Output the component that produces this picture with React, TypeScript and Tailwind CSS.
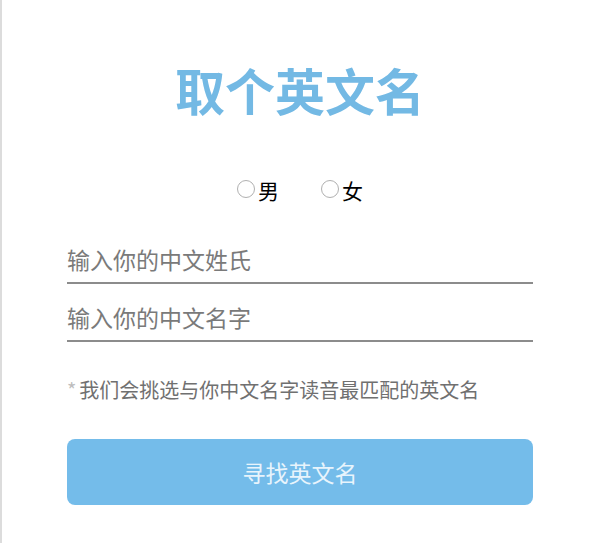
import { useState } from "react";

const font = { fontFamily: '"Noto Sans CJK SC", "Noto Sans", sans-serif' };

export default function App() {
  const [gender, setGender] = useState("");
  const [surname, setSurname] = useState("");
  const [givenName, setGivenName] = useState("");

  return (
    <div
      style={font}
      className="min-h-[543px] w-[600px] bg-white border-l-2 border-[#dcdcdc] pl-[65px] pr-[67px]"
    >
      <h1 className="pt-[62px] text-center text-[50px] leading-[54px] font-bold text-[#73b9e4]">
        取个英文名
      </h1>

      {/* gender */}
      <div className="mt-[62px] flex justify-center gap-[42px] text-[21px] leading-6 text-black">
        {[
          { value: "male", label: "男" },
          { value: "female", label: "女" },
        ].map((g) => (
          <label key={g.value} className="flex items-center gap-[3px] cursor-pointer">
            <input
              type="radio"
              name="gender"
              value={g.value}
              checked={gender === g.value}
              onChange={() => setGender(g.value)}
              className="appearance-none w-[18px] h-[18px] rounded-full border-[1.5px] border-[#b0b0b0] checked:bg-[#73b9e4] -mt-[3px]"
            />
            <span>{g.label}</span>
          </label>
        ))}
      </div>

      {/* name fields */}
      <div className="mt-[36px] flex flex-col gap-[12px]">
        <input
          value={surname}
          onChange={(e) => setSurname(e.target.value)}
          placeholder="输入你的中文姓氏"
          className="h-[46px] w-full border-b-2 border-[#8c8c8c] pb-[2px] text-[23px] text-[#333] placeholder:text-[#7a7a7a] outline-none"
        />
        <input
          value={givenName}
          onChange={(e) => setGivenName(e.target.value)}
          placeholder="输入你的中文名字"
          className="h-[46px] w-full border-b-2 border-[#8c8c8c] pb-[2px] text-[23px] text-[#333] placeholder:text-[#7a7a7a] outline-none"
        />
      </div>

      <p className="mt-[36px] text-[20px] leading-6 text-[#707070]">
        <span className="text-[#bdbdbd] mr-[3px]">*</span>
        我们会挑选与你中文名字读音最匹配的英文名
      </p>

      <button className="mt-[37px] h-[66px] w-full rounded-[8px] bg-[#74bcea] text-[23px] text-[#e8f4fc]">
        寻找英文名
      </button>
    </div>
  );
}
